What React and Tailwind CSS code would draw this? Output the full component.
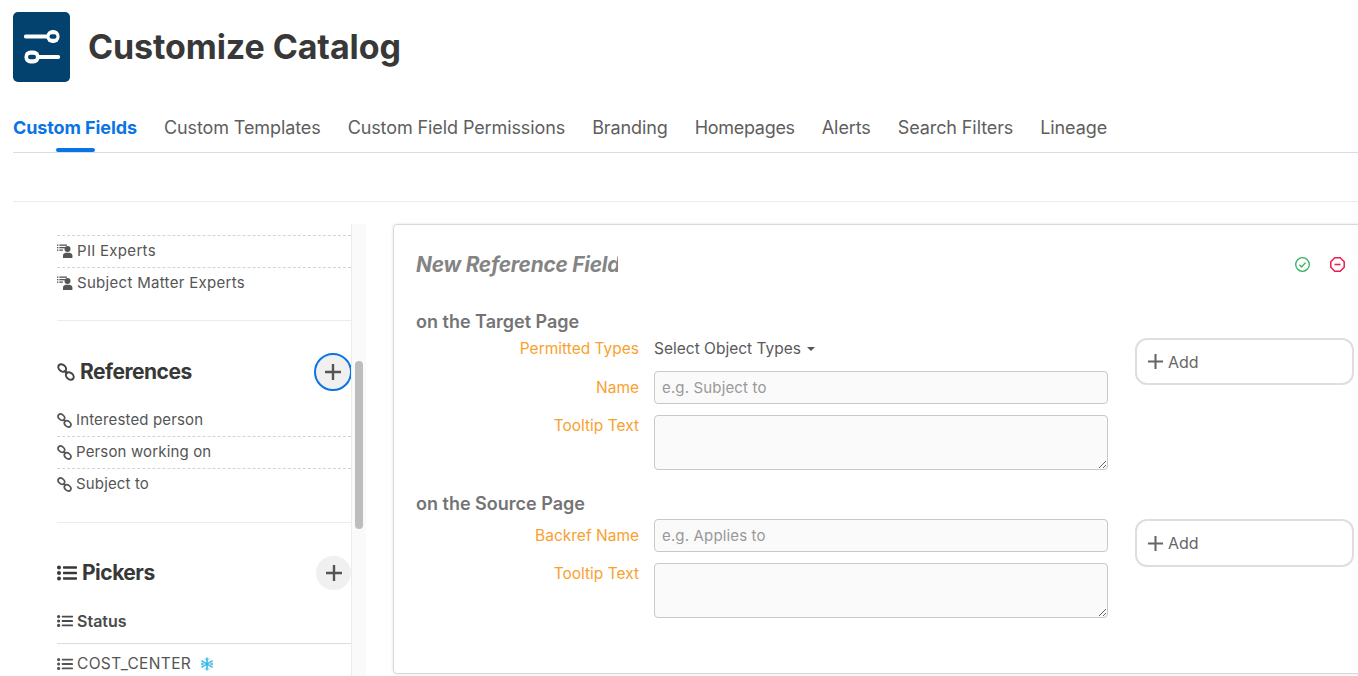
import React from "react";

const tabs = [
  "Custom Fields",
  "Custom Templates",
  "Custom Field Permissions",
  "Branding",
  "Homepages",
  "Alerts",
  "Search Filters",
  "Lineage",
];

const font = "font-['Inter','Liberation_Sans',sans-serif]";

const LinkIcon = ({ size = 15 }) => (
  <svg width={size} height={size} viewBox="0 0 18 18" fill="none" stroke="currentColor" strokeWidth="2" className="shrink-0">
    <ellipse cx="5.2" cy="5" rx="4.3" ry="3.2" transform="rotate(40 5.2 5)" />
    <ellipse cx="12.8" cy="13" rx="4.3" ry="3.2" transform="rotate(40 12.8 13)" />
    <path d="M7.6 7.6l2.8 2.9" strokeWidth="2.4" />
  </svg>
);

const ListIcon = ({ size = 16 }) => (
  <svg width={size} height={size} viewBox="0 0 20 16" fill="currentColor" className="shrink-0">
    <circle cx="2" cy="2.5" r="2" />
    <circle cx="2" cy="8" r="2" />
    <circle cx="2" cy="13.5" r="2" />
    <rect x="6" y="1.3" width="14" height="2.4" rx="0.6" />
    <rect x="6" y="6.8" width="14" height="2.4" rx="0.6" />
    <rect x="6" y="12.3" width="14" height="2.4" rx="0.6" />
  </svg>
);

const PeopleIcon = () => (
  <svg width="16" height="15" viewBox="0 0 16 15" fill="currentColor" className="shrink-0">
    <rect x="0" y="0.5" width="1.4" height="1.3" />
    <rect x="2.4" y="0.5" width="7.5" height="1.3" />
    <rect x="0" y="3" width="1.4" height="1.3" />
    <rect x="2.4" y="3" width="5.5" height="1.3" />
    <rect x="0" y="5.5" width="1.4" height="1.3" />
    <rect x="2.4" y="5.5" width="3.5" height="1.3" />
    <circle cx="10.5" cy="5" r="3" />
    <path d="M6 14v-2.4C6 9.8 7.6 8.8 9 8.8h3c1.6 0 3.4 1 3.4 2.8V14z" />
  </svg>
);

const Plus = ({ size = 18, width = 2.4 }) => (
  <svg width={size} height={size} viewBox="0 0 18 18" stroke="currentColor" strokeWidth={width} className="shrink-0">
    <path d="M9 1v16M1 9h16" />
  </svg>
);

const Snowflake = () => (
  <svg width="14" height="14" viewBox="0 0 14 14" fill="none" stroke="#38b6ea" strokeWidth="1.5" className="shrink-0">
    <path d="M7 0.5v13M1.4 3.7l11.2 6.6M12.6 3.7L1.4 10.3" />
    <path d="M5 1.5l2 2 2-2M5 12.5l2-2 2 2M1 6l2.6 1L1 8M13 6l-2.6 1L13 8" strokeWidth="1" />
  </svg>
);

const Row = ({ icon, children, border = true, className = "tracking-[0.15px]" }) => (
  <div className={`h-8 flex items-center gap-1 text-[15px] text-[#555] ${className} ${border ? "border-t border-dashed border-[#d4d4d4]" : ""}`}>
    {icon}
    <span>{children}</span>
  </div>
);

const AddBox = ({ className }) => (
  <button className={`w-[220px] rounded-xl border-2 border-[#dedede] bg-white flex items-center gap-1 pl-[10px] text-[16px] text-[#666] ${className}`}>
    <Plus size={17} width={2.2} />
    Add
  </button>
);

const Label = ({ children, className = "" }) => (
  <label className={`w-[223px] shrink-0 text-right text-[15.5px] text-[#f9a12e] ${className}`}>{children}</label>
);

const inputCls =
  "w-[454px] h-[33px] rounded border border-[#c8c8c8] bg-[#fafafa] px-[7px] text-[15px] tracking-[0.15px] text-[#555] placeholder:text-[#999] outline-none";
const areaCls = "block w-[454px] h-[55px] rounded border border-[#c8c8c8] bg-[#fafafa] outline-none";

export default function App() {
  return (
    <div className={`${font} h-[676px] overflow-hidden bg-white pl-[13px] text-[#555]`}>
      <header className="h-[104px] pt-3 flex items-start gap-[18px]">
        <div className="w-[57px] h-[70px] rounded-[5px] bg-[#03426e] flex items-center justify-center">
          <svg width="36" height="34" viewBox="0 0 36 34">
            <path d="M2 6.5h22M15 27h19" stroke="#fff" strokeWidth="4.2" strokeLinecap="round" />
            <rect x="22.5" y="0" width="13" height="13" rx="6" fill="#fff" />
            <rect x="25.5" y="4.2" width="7" height="4.6" rx="2.3" fill="#03426e" />
            <rect x="0.5" y="20.5" width="15" height="13" rx="6" fill="#fff" />
            <rect x="4" y="24.7" width="8" height="4.6" rx="2.3" fill="#03426e" />
          </svg>
        </div>
        <h1 className="mt-[13px] text-[34px] leading-[44px] font-bold text-[#383838] tracking-[-0.1px]">Customize Catalog</h1>
      </header>

      <nav className="h-[49px] border-b border-[#d5dee4] flex gap-[27px]">
        {tabs.map((t, i) => (
          <div key={t} className="relative h-[48px] flex items-center pb-[1px]">
            <span
              className={
                i === 0
                  ? "text-[18px] font-bold text-[#0a74e4] tracking-[-0.1px]"
                  : t === "Homepages"
                  ? "text-[18px] text-[#5e5e5e] tracking-[-0.3px]"
                  : "text-[18px] text-[#5e5e5e] tracking-[-0.1px]"
              }
            >
              {t}
            </span>
            {i === 0 && <div className="absolute left-[43px] bottom-0 w-[39px] h-1 rounded-full bg-[#0a74e4]" />}
          </div>
        ))}
      </nav>

      <div className="h-[49px] border-b border-[#ececec]" />

      <div className="flex pt-[22px] h-[474px]">
        <aside className="w-[353px] h-[452px] flex shrink-0 overflow-hidden">
          <div className="w-[338px] pl-[44px] pt-[11px] shrink-0">
            <Row icon={<PeopleIcon />} className="tracking-[0.3px]">PII Experts</Row>
            <Row icon={<PeopleIcon />} className="tracking-[0.3px]">Subject Matter Experts</Row>
            <div className="h-[22px] border-b border-[#ebebeb]" />

            <div className="mt-[31px] h-[40px] flex items-center justify-between">
              <div className="flex items-center gap-[5px] text-[21px] font-bold text-[#383838] tracking-[-0.5px]">
                <span className="text-[#444]"><LinkIcon size={18} /></span>
                References
              </div>
              <div className="w-[38px] h-[38px] -mr-[1px] rounded-full bg-[#f0f0f0] border-2 border-[#0a74e4] flex items-center justify-center text-[#555]">
                <Plus />
              </div>
            </div>
            <div className="h-[12px]" />
            <Row icon={<LinkIcon />} border={false}>Interested person</Row>
            <Row icon={<LinkIcon />}>Person working on</Row>
            <Row icon={<LinkIcon />}>Subject to</Row>
            <div className="h-[23px] border-b border-[#ebebeb]" />

            <div className="mt-[33px] h-[34px] flex items-center justify-between">
              <div className="flex items-center gap-[5px] text-[21px] font-bold text-[#383838] tracking-[-0.5px]">
                <ListIcon size={20} />
                Pickers
              </div>
              <div className="w-[35px] h-[34px] rounded-full bg-[#f0f0f0] flex items-center justify-center text-[#555]">
                <Plus />
              </div>
            </div>
            <div className="mt-[16px] h-[38px] border-b border-[#dcdcdc] flex items-start gap-1 pt-[3px] text-[16px] font-semibold text-[#4a4a4a]">
              <span className="mt-[4px]"><ListIcon /></span>
              Status
            </div>
            <div className="h-[40px] flex items-center gap-1 text-[15.5px] tracking-[0.35px] text-[#555]">
              <ListIcon />
              <span>COST_CENTER</span>
              <span className="ml-[5px]"><Snowflake /></span>
            </div>
          </div>
          <div className="flex-1 border-x border-[#ececec] bg-[#fafafa] pt-[137px] px-[3px]">
            <div className="w-2 h-[168px] rounded bg-[#bdbdbd]" />
          </div>
        </aside>

        <section className="ml-[27px] w-[975px] h-[450px] rounded border border-[#d9d9d9] shadow-[0_0_3px_rgba(0,0,0,0.12)] pl-[22px] pr-[13px]">
          <div className="h-[80px] flex items-center justify-between">
            <div className="w-[202px] overflow-hidden whitespace-nowrap italic font-bold text-[20.8px] text-[#848484] tracking-[-0.2px]">
              New Reference Field
            </div>
            <div className="flex items-center gap-[20px] pr-[9px] mb-[2px]">
              <svg width="15" height="15" viewBox="0 0 15 15" fill="none" stroke="#33b35c" strokeWidth="1.3">
                <circle cx="7.5" cy="7.5" r="6.8" />
                <path d="M4.4 7.8l2.2 2.2 4-4.4" strokeWidth="1.4" />
              </svg>
              <svg width="15" height="15" viewBox="0 0 15 15" fill="none" stroke="#ee1c4e" strokeWidth="1.5">
                <path d="M4.8 0.8h5.4l4 4v5.4l-4 4H4.8l-4-4V4.8z" />
                <path d="M4.6 7.5h5.8" strokeWidth="1.6" />
              </svg>
            </div>
          </div>

          <h3 className="h-[24px] mt-[5px] text-[18px] leading-[24px] font-semibold text-[#747474]">on the Target Page</h3>
          <div className="flex">
            <div className="w-[719px]">
              <div className="flex h-[29px] items-center gap-[15px]">
                <Label>Permitted Types</Label>
                <span className="text-[15.5px] text-[#5a5a5a] flex items-center gap-[6px]">
                  Select Object Types
                  <span className="w-0 h-0 border-x-[4px] border-x-transparent border-t-[4px] border-t-[#555]" />
                </span>
              </div>
              <div className="flex items-center gap-[15px] mt-[8px]">
                <Label>Name</Label>
                <input className={inputCls} placeholder="e.g. Subject to" />
              </div>
              <div className="flex gap-[15px] mt-[11px]">
                <Label className="-mt-[1px]">Tooltip Text</Label>
                <textarea className={areaCls} />
              </div>
            </div>
            <AddBox className="mt-[4px] ml-[3px] h-[47px]" />
          </div>

          <h3 className="h-[24px] mt-[22px] text-[18px] leading-[24px] font-semibold text-[#747474]">on the Source Page</h3>
          <div className="flex mt-[3px]">
            <div className="w-[719px]">
              <div className="flex items-center gap-[15px]">
                <Label>Backref Name</Label>
                <input className={inputCls} placeholder="e.g. Applies to" />
              </div>
              <div className="flex gap-[15px] mt-[11px]">
                <Label className="-mt-[1px]">Tooltip Text</Label>
                <textarea className={areaCls} />
              </div>
            </div>
            <AddBox className="ml-[3px] h-[48px]" />
          </div>
        </section>
      </div>
    </div>
  );
}
